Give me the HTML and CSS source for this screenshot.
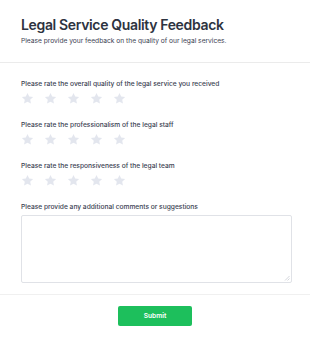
FILE: index.html
```html
<!DOCTYPE html>
<html lang="en">
<head>
    <meta charset="UTF-8">
    <meta name="viewport" content="width=device-width, initial-scale=1.0">
    <title>Legal Service Quality Feedback</title>
    <link rel="stylesheet" href="styles.css">
</head>
<body>
    <div class="form">
        <div class="header">
            <h1>Legal Service Quality Feedback</h1>
            <p class="subtitle">Please provide your feedback on the quality of our legal services.</p>
        </div>
        <div class="body">
            <div class="question">
                <label>Please rate the overall quality of the legal service you received</label>
                <div class="stars" data-count="5"></div>
            </div>
            <div class="question">
                <label>Please rate the professionalism of the legal staff</label>
                <div class="stars" data-count="5"></div>
            </div>
            <div class="question">
                <label>Please rate the responsiveness of the legal team</label>
                <div class="stars" data-count="5"></div>
            </div>
            <div class="question">
                <label>Please provide any additional comments or suggestions</label>
                <div class="comments-wrap">
                    <textarea class="comments"></textarea>
                    <svg class="grip" viewBox="0 0 6 6"><path d="M5.5 1L1 5.5M5.5 3.5L3.5 5.5" stroke="#c9ccd3" stroke-width="0.8"/></svg>
                </div>
            </div>
        </div>
        <div class="footer">
            <button class="submit">Submit</button>
        </div>
    </div>
    <script>
        // Dibujar las estrellas de cada pregunta
        const star = '<svg class="star" viewBox="0 0 24 24"><path d="M12 1.8l3.1 6.6 7.2.9-5.3 5 1.4 7.1L12 17.9l-6.4 3.5 1.4-7.1-5.3-5 7.2-.9z"/></svg>';
        document.querySelectorAll(".stars").forEach(function (el) {
            el.innerHTML = star.repeat(parseInt(el.dataset.count));
        });
    </script>
</body>
</html>
```

FILE: styles.css
```css
body {
    font-family: Inter, "Noto Sans", sans-serif;
    margin: 0;
    background: #fff;
    color: #374151;
}
.header {
    padding: 15px 21px 16px;
    border-bottom: 1px solid #ebebeb;
}
.header h1 {
    margin: 0;
    font-size: 14px;
    font-weight: 600;
    letter-spacing: -0.35px;
    color: #2d3340;
    line-height: 20px;
}
.subtitle {
    margin: 2px 0 0;
    font-size: 6.65px;
    color: #3b4252;
    line-height: 9px;
}
.body {
    padding: 17px 18px 11px 21px;
}
.question {
    margin-bottom: 16px;
}
.question:last-child {
    margin-bottom: 0;
}
.question label {
    display: block;
    font-size: 6.65px;
    font-weight: 500;
    color: #3b4252;
    line-height: 9px;
    margin-bottom: 3px;
}
.stars {
    display: flex;
    gap: 10px;
}
.star {
    width: 13px;
    height: 13px;
    fill: #e3e6ee;
}
.comments-wrap {
    position: relative;
}
.comments {
    display: block;
    box-sizing: border-box;
    width: 100%;
    height: 68px;
    border: 1px solid #e0e2e7;
    border-radius: 2px;
    resize: none;
}
.grip {
    position: absolute;
    right: 2px;
    bottom: 2px;
    width: 6px;
    height: 6px;
}
.footer {
    border-top: 1px solid #f0f0f0;
    padding: 11px 0;
    display: flex;
    justify-content: center;
}
.submit {
    width: 74px;
    height: 20px;
    background: #1dbf5c;
    color: #fff;
    border: none;
    border-radius: 2px;
    font-family: Inter, sans-serif;
    font-size: 6.65px;
    font-weight: 600;
}
```
